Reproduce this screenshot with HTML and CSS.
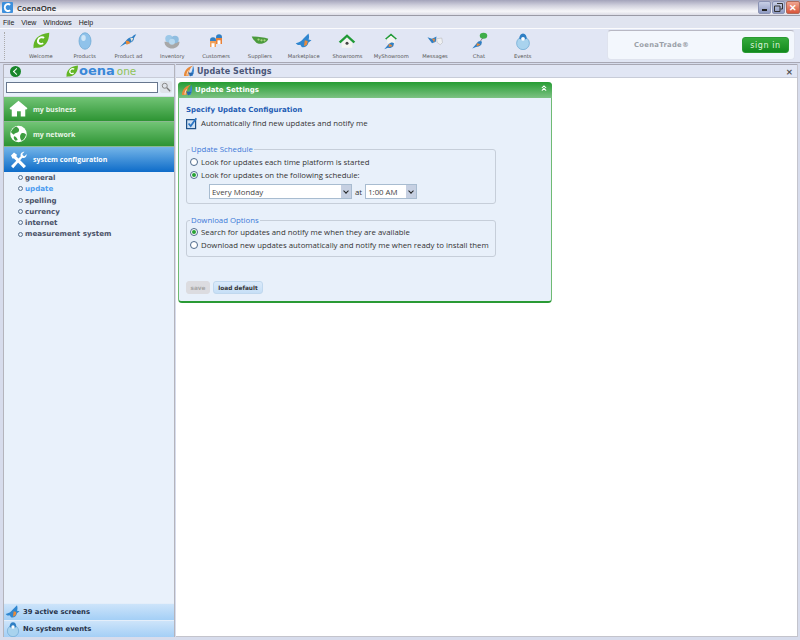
FILE: index.html
```html
<!DOCTYPE html>
<html lang="en">
<head>
  <meta charset="UTF-8" />
  <title>CoenaOne</title>
  <link rel="stylesheet" href="styles.css">
</head>
<body>
  <svg class="defs" width="0" height="0">
    <defs>
      <symbol id="bird" viewBox="0 0 24 24">
        <path d="M1 20 9 12c2-3 5-5 8-5l3-3 3-1-3 5c0 4-3 6-7 7l-5 1z" fill="#2f7fc4"/>
        <path d="M9 12c3-1 5 0 6 3l-5 2z" fill="#e88a3a"/>
        <path d="M15 8l2 5 2-5z" fill="#e8e4d8"/>
      </symbol>
      <symbol id="bird-fly" viewBox="0 0 24 24">
        <path d="M1 15c5-1 8-3 10-6l7-7c1 3 1 6 0 8l4 1-4 3c-1 5-5 7-9 6l-2-3c-3 1-4 0-6-2z" fill="#2f86cf"/>
        <path d="M13 11l4 1-1 5-4 2z" fill="#e88a3a"/>
      </symbol>
      <symbol id="house" viewBox="0 0 24 24">
        <path d="M1 13 12 3l11 10-2.500 2L12 7l-8.500 8z" fill="#1f9a35"/>
        <path d="M5 14 12 8l7 6v7H5z" fill="#f4f4f0"/>
        <circle cx="12" cy="15" r="2" fill="#444"/>
      </symbol>
      <symbol id="leaf" viewBox="0 0 24 24">
        <path d="M2 22C1 10 8 3 23 1c0 12-6 20-16 20-2 0-4 0-5 1z" fill="#63b626"/>
        <path d="M16 8c-2-2-7-1-8 3s3 6 7 4" fill="none" stroke="#fff" stroke-width="2.500"/>
      </symbol>
      <symbol id="ball" viewBox="0 0 24 24">
        <circle cx="12" cy="15" r="8.500" fill="#a9d3ee" stroke="#6fa9d3"/>
        <path d="M7 9c0-4 2-7 5-7s5 3 5 7c-3 2-7 2-10 0z" fill="#2f7fc4"/>
        <circle cx="12" cy="9" r="2.500" fill="#fff"/>
      </symbol>
      <symbol id="refresh" viewBox="0 0 24 24">
        <path d="M2 22C2 11 9 4 20 1c-6 5-9 11-9 21z" fill="#e88a3a"/>
        <path d="M20 1c3 6 3 14-1 21h-7c5-5 7-12 8-21z" fill="#3b86cf"/>
        <path d="M10 15l11 1-6 7z" fill="#2a68ad"/>
        <path d="M8 21c0-4 1-7 3-10" stroke="#fff" fill="none" stroke-width="1.500"/>
      </symbol>
    </defs>
  </svg>

  <header class="titlebar">
    <svg class="app-icon" viewBox="0 0 12 12"><rect width="12" height="12" rx="1" fill="#3d8fdc"/><path d="M9 3C6 1 3 3 3 6s3 5 6 3" fill="none" stroke="#fff" stroke-width="2"/></svg>
    <span class="app-name">CoenaOne</span>
    <div class="win-btns">
      <span class="win-btn"><i class="min-glyph"></i></span>
      <span class="win-btn">
        <svg viewBox="0 0 9 9" width="9" height="9"><path d="M3 .5h5.500V6H6.500M.5 3H6v5.500H.5z" fill="none" stroke="#333"/></svg>
      </span>
      <span class="win-btn win-close">✕</span>
    </div>
  </header>

  <nav class="menubar">
    <span>File</span><span>View</span><span>Windows</span><span>Help</span>
  </nav>

  <div class="toolbar">
    <div class="tools">
      <div class="tool"><svg class="tool-icon"><use href="#leaf"/></svg><span>Welcome</span></div>
      <div class="tool">
        <svg class="tool-icon" viewBox="0 0 24 24"><ellipse cx="12" cy="12" rx="8" ry="11" fill="#8fc2ea" stroke="#6fa9d3"/><ellipse cx="10" cy="8" rx="3" ry="4" fill="#cfe6f7"/></svg>
        <span>Products</span>
      </div>
      <div class="tool"><svg class="tool-icon"><use href="#bird"/></svg><span>Product ad</span></div>
      <div class="tool">
        <svg class="tool-icon" viewBox="0 0 24 24"><path d="M2 13c0 6 5 9 10 9s10-3 10-9z" fill="#a8a8a8"/><circle cx="8" cy="9" r="5" fill="#9cc8e8"/><circle cx="16" cy="10" r="5" fill="#8fbde0"/><circle cx="12" cy="13" r="4" fill="#b8d9f0"/></svg>
        <span>Inventory</span>
      </div>
      <div class="tool">
        <svg class="tool-icon" viewBox="0 0 24 24"><circle cx="8" cy="11" r="4" fill="#2f7fc4"/><path d="M4 12h8v8H4z" fill="#f0a05a"/><path d="M6 15h4v5H6z" fill="#fff"/><circle cx="16" cy="7" r="4" fill="#2f7fc4"/><path d="M12 8h8v8h-8z" fill="#e8823a"/><path d="M14 11h4v5h-4z" fill="#fff"/></svg>
        <span>Customers</span>
      </div>
      <div class="tool">
        <svg class="tool-icon" viewBox="0 0 24 24"><path d="M1 6c6 0 16 1 22 3-2 7-14 9-17 4C4 11 2 9 1 6z" fill="#4b9a3c"/><circle cx="10" cy="10" r="1.500" fill="#a6d67e"/><circle cx="14" cy="11" r="1.500" fill="#a6d67e"/><circle cx="18" cy="11" r="1.500" fill="#a6d67e"/></svg>
        <span>Suppliers</span>
      </div>
      <div class="tool"><svg class="tool-icon"><use href="#bird-fly"/></svg><span>Marketplace</span></div>
      <div class="tool"><svg class="tool-icon"><use href="#house"/></svg><span>Showrooms</span></div>
      <div class="tool">
        <svg class="tool-icon" viewBox="0 0 24 24"><path d="M4 9 12 2l8 7-2 1-6-5-6 5z" fill="#1f9a35"/><path d="M7 9l5-4 5 4v6H7z" fill="#f4f4f0"/><path d="M3 23l6-7c2-2 5-3 7-1l-1 4c-2 2-5 3-7 2z" fill="#2f7fc4"/><path d="M9 16c2 0 4 1 5 3l-5 1z" fill="#e88a3a"/></svg>
        <span>MyShowroom</span>
      </div>
      <div class="tool">
        <svg class="tool-icon" viewBox="0 0 24 24"><path d="M2 7l6 2 6-3-1 7-5 2z" fill="#2f7fc4"/><path d="M8 9l4 0-1 5z" fill="#e88a3a"/><path d="M14 9l7-1 1 6-3 3-4-3z" fill="#eef0f2" stroke="#aaa" stroke-width=".6"/></svg>
        <span>Messages</span>
      </div>
      <div class="tool">
        <svg class="tool-icon" viewBox="0 0 24 24"><ellipse cx="18" cy="5" rx="5" ry="4" fill="#3fae49"/><path d="M3 22l6-7c2-3 5-4 7-2l-1 4c-2 2-5 3-7 3z" fill="#2f7fc4"/><path d="M9 15c2 0 4 1 5 2l-5 2z" fill="#e88a3a"/><path d="M14 12l3-4" stroke="#666"/></svg>
        <span>Chat</span>
      </div>
      <div class="tool"><svg class="tool-icon"><use href="#ball"/></svg><span>Events</span></div>
    </div>
    <div class="signin-box">
      <span class="trade">CoenaTrade®</span>
      <button class="signin-btn">sign in</button>
    </div>
  </div>

  <div class="workspace">
    <aside class="sidebar">
      <div class="side-head">
        <span class="back-btn"></span>
        <div class="logo">
          <svg class="logo-leaf"><use href="#leaf"/></svg><span class="logo-a">oena</span><span class="logo-b">one</span>
        </div>
      </div>
      <div class="search-row">
        <input class="search-input" type="text">
        <span class="search-btn">
          <svg viewBox="0 0 12 12" width="10" height="10"><circle cx="4.500" cy="4.500" r="3" fill="none" stroke="#888" stroke-width="1.200"/><path d="M7 7l4 4" stroke="#777" stroke-width="1.600"/></svg>
        </span>
      </div>

      <div class="acc acc-green">
        <svg class="acc-icon" viewBox="0 0 24 24"><path d="M0 11 12 1l12 10-1.500 1.500H21V22h-6v-7H10v7H3V12.500H1.500z" fill="#fff"/></svg>
        <span>my business</span>
      </div>
      <div class="acc acc-green">
        <svg class="acc-icon" viewBox="0 0 24 24"><circle cx="12" cy="12" r="11" fill="#fff"/><path d="M9 2c3 2 5 4 3 7-2 2-5 1-6 4-2-1-4-3-4-4 2-3 4-6 7-7zM16 11c3-1 5 0 6 2-1 4-3 7-6 8-2-3-3-7 0-10zM6 15c2 0 4 2 5 5l-3 1c-2-2-3-4-2-6z" fill="#3d9d3f"/></svg>
        <span>my network</span>
      </div>
      <div class="acc acc-blue">
        <svg class="acc-icon" viewBox="0 0 24 24"><path d="M2 20 15 7c-1-3 1-6 5-6l-3 3 1 2 2 1 3-3c0 4-3 6-6 5L5 23z" fill="#fff"/><path d="M2 6l4-4 4 3-1 2 13 13-3 3L6 10 4 10z" fill="#fff"/></svg>
        <span>system configuration</span>
      </div>
      <ul class="sub-list">
        <li>general</li>
        <li class="sub-active">update</li>
        <li>spelling</li>
        <li>currency</li>
        <li>internet</li>
        <li>measurement system</li>
      </ul>

      <div class="side-foot">
        <div class="foot-row"><svg class="foot-icon"><use href="#bird-fly"/></svg><span>39 active screens</span></div>
        <div class="foot-row"><svg class="foot-icon"><use href="#ball"/></svg><span>No system events</span></div>
      </div>
    </aside>

    <main class="content">
      <div class="content-head">
        <svg class="head-icon"><use href="#refresh"/></svg>
        <span class="content-title">Update Settings</span>
        <span class="content-x">✕</span>
      </div>
      <div class="content-body">
        <section class="panel">
          <div class="panel-head">
            <svg class="head-icon"><use href="#refresh"/></svg>
            <span class="panel-title">Update Settings</span>
            <svg class="chevrons" viewBox="0 0 7 7"><path d="M1 3.500 3.500 1 6 3.500M1 6.500 3.500 4 6 6.500" fill="none" stroke="#fff" stroke-width="1.200"/></svg>
          </div>
          <div class="panel-body">
            <h2 class="spec-title">Specify Update Configuration</h2>
            <div class="auto-row">
              <svg class="big-check" viewBox="0 0 14 14"><rect x=".7" y="2.500" width="10.500" height="10.500" fill="#cfe0f2" stroke="#1d4f86" stroke-width="1.400"/><path d="M3 7l2.500 3L12 1" fill="none" stroke="#2a76c6" stroke-width="2"/></svg>
              <span>Automatically find new updates and notify me</span>
            </div>

            <fieldset class="group group-schedule">
              <legend>Update Schedule</legend>
              <div class="radio-row"><i class="radio"></i>Look for updates each time platform is started</div>
              <div class="radio-row"><i class="radio radio-on"></i>Look for updates on the following schedule:</div>
              <div class="select-row">
                <span class="select select-day"><span class="select-text">Every Monday</span><i class="select-arrow"></i></span>
                <span>at</span>
                <span class="select select-time"><span class="select-text">1:00 AM</span><i class="select-arrow"></i></span>
              </div>
            </fieldset>

            <fieldset class="group group-download">
              <legend>Download Options</legend>
              <div class="radio-row"><i class="radio radio-on"></i>Search for updates and notify me when they are available</div>
              <div class="radio-row"><i class="radio"></i>Download new updates automatically and notify me when ready to install them</div>
            </fieldset>

            <div class="actions">
              <button class="btn btn-off">save</button>
              <button class="btn btn-on">load default</button>
            </div>
          </div>
        </section>
      </div>
    </main>
  </div>
</body>
</html>
```

FILE: styles.css
```css
* {
  box-sizing: border-box;
}

html, body {
  margin: 0;
  height: 640px;
  overflow: hidden;
}

body {
  display: flex;
  flex-direction: column;
  background: #e0e4f0;
  font-family: "Open Sans", "Noto Sans", sans-serif;
  font-size: 7.800px;
  color: #333;
}

.defs {
  position: absolute;
}

/* window chrome */
.titlebar {
  height: 16px;
  display: flex;
  align-items: center;
  padding-left: 2px;
  background: linear-gradient(#a3a3ba, #cfcfdc 35%, #f6f6f9 75%, #dcdce6);
  border-bottom: 1px solid #9a9aa6;
}

.app-icon {
  width: 11px;
  height: 11px;
}

.app-name {
  margin-left: 4px;
  font-size: 7.800px;
  font-weight: 600;
  color: #222;
}

.win-btns {
  margin-left: auto;
  display: flex;
  gap: 1px;
}

.win-btn {
  width: 13px;
  height: 13px;
  display: flex;
  align-items: center;
  justify-content: center;
  border: 1px solid #8b93b4;
  border-radius: 2px;
  background: linear-gradient(#c8cfe6, #8e9ac2);
}

.win-close {
  width: 14px;
  border-color: #b06a5a;
  background: linear-gradient(#f0a590, #d9553a);
  color: #fff;
  font-size: 9px;
  font-weight: 700;
}

.min-glyph {
  width: 5px;
  height: 2px;
  margin-top: 5px;
  background: #222;
}

.menubar {
  height: 12px;
  display: flex;
  align-items: center;
  gap: 7px;
  padding-left: 3px;
  color: #222;
  font-family: "Liberation Sans", sans-serif;
  font-size: 7px;
}

.toolbar {
  height: 35px;
  display: flex;
  background: #e1e6f4;
  border-top: 1px solid #fbfbfd;
  border-bottom: 1px solid #a8a8b4;
}

.tools {
  display: flex;
  height: 28px;
  margin: 3px 0 0 4px;
  padding-left: 14px;
  border-left: 1px dotted #aaa;
}

.tool {
  width: 43.800px;
  height: 28px;
  display: flex;
  flex-direction: column;
  align-items: center;
  justify-content: space-between;
  font-family: "DejaVu Sans", sans-serif;
  font-size: 5.200px;
  line-height: 7px;
  color: #555;
  white-space: nowrap;
}

.tool-icon {
  width: 18px;
  height: 18px;
  flex: none;
}

.signin-box {
  width: 188px;
  height: 30px;
  margin: 1px 5px 0 auto;
  display: flex;
  align-items: center;
  padding: 0 5px 0 26px;
  background: #f3f7fd;
  border: 1px solid #dfe3ee;
  border-top-color: #b8b8c4;
  border-radius: 4px;
}

.trade {
  font-family: "DejaVu Sans", sans-serif;
  font-size: 6.800px;
  font-weight: 700;
  color: #9aa0a8;
  letter-spacing: .3px;
}

.signin-btn {
  margin-left: auto;
  width: 47px;
  height: 16px;
  padding: 0;
  border: 1px solid #2a9a32;
  border-radius: 3px;
  background: linear-gradient(#35ab3c, #138a1d);
  color: #dff3de;
  font-family: "DejaVu Sans", sans-serif;
  font-size: 8px;
  letter-spacing: .6px;
}

/* main area */
.workspace {
  flex: 1;
  display: flex;
  min-height: 0;
  padding: 1px 2px 3px 3px;
  gap: 1px;
  background: #d7dcec;
}

.sidebar {
  width: 172px;
  display: flex;
  flex-direction: column;
  background: #e9f1fb;
  border-left: 1px solid #b4b4bc;
  border-right: 1px solid #b4b4bc;
}

.side-head {
  height: 14px;
  display: flex;
  align-items: center;
  padding-left: 6px;
  background: #e1e6f4;
  border-top: 1px solid #a8a8b4;
  border-bottom: 1px solid #c8ccd8;
}

.back-btn {
  width: 11px;
  height: 11px;
  border-radius: 50%;
  background: #19862a;
  position: relative;
}

.back-btn::after {
  content: "";
  position: absolute;
  left: 4px;
  top: 3.500px;
  width: 4px;
  height: 4px;
  border-left: 1.500px solid #fff;
  border-bottom: 1.500px solid #fff;
  transform: rotate(45deg);
}

.logo {
  display: flex;
  align-items: center;
  margin-left: 44px;
  font-family: "DejaVu Sans", sans-serif;
  line-height: 12px;
}

.logo-leaf {
  width: 14px;
  height: 13px;
}

.logo-a {
  font-size: 13px;
  font-weight: 700;
  color: #3a88d8;
}

.logo-b {
  margin-left: 2px;
  font-size: 10.500px;
  color: #8fc35a;
}

.search-row {
  height: 19px;
  display: flex;
  align-items: center;
  gap: 2px;
  padding-left: 2px;
  border-bottom: 1px solid #d8dce6;
}

.search-input {
  width: 152px;
  height: 11px;
  padding: 0;
  border: 1px solid #66768e;
  background: #fff;
}

.search-btn {
  width: 12px;
  height: 12px;
  display: flex;
  align-items: center;
  justify-content: center;
  background: #dfe3ea;
  border-radius: 2px;
}

.acc {
  height: 25px;
  flex: none;
  display: flex;
  align-items: center;
  padding-left: 5px;
  font-size: 7px;
  font-weight: 700;
  color: #e8f5e6;
}

.acc-green {
  background: linear-gradient(#72c476, #2d9433);
  border-bottom: 1px solid #8bb890;
}

.acc-blue {
  background: linear-gradient(#74b5e8, #0e6cc9);
  color: #fff;
}

.acc-icon {
  width: 19px;
  height: 18px;
  margin-right: 5px;
}

.sub-list {
  margin: 0;
  padding: 0 0 0 14px;
  list-style: none;
  font-family: "DejaVu Sans", sans-serif;
  font-size: 7.100px;
  font-weight: 700;
  line-height: 11.300px;
  color: #4a5268;
}

.sub-list li {
  display: flex;
  align-items: center;
}

.sub-list li::before {
  content: "";
  width: 3px;
  height: 3px;
  flex: none;
  margin-right: 2px;
  border: 1px solid #58708c;
  border-radius: 50%;
}

.sub-list .sub-active {
  color: #4b9cf0;
}

.side-foot {
  margin-top: auto;
}

.foot-row {
  height: 17px;
  display: flex;
  align-items: center;
  padding-left: 1px;
  gap: 2px;
  background: linear-gradient(#cde4fa, #a4cff6);
  border-top: 1px solid #e4eefa;
  font-family: "DejaVu Sans", sans-serif;
  font-size: 6.800px;
  font-weight: 700;
  color: #26324a;
}

.foot-icon {
  width: 16px;
  height: 16px;
}

.content {
  flex: 1;
  display: flex;
  flex-direction: column;
  background: #fff;
  border-bottom: 1px solid #c4c4cc;
  border-right: 1px solid #c4c4cc;
}

.content-head {
  height: 14px;
  display: flex;
  align-items: center;
  padding: 0 4px 0 7px;
  background: #e1e6f4;
  border-top: 1px solid #a8a8b4;
  border-bottom: 1px solid #c8ccd8;
}

.head-icon {
  width: 12px;
  height: 12px;
}

.content-title {
  margin-left: 2px;
  font-family: "DejaVu Sans", sans-serif;
  font-size: 8px;
  font-weight: 700;
  letter-spacing: .1px;
  color: #4a5678;
}

.content-x {
  margin-left: auto;
  font-size: 8px;
  font-weight: 700;
  color: #555;
}

.content-body {
  flex: 1;
  padding: 4px 0 0 2px;
}

.panel {
  width: 374px;
  height: 221px;
  display: flex;
  flex-direction: column;
  background: #e8f0fa;
  border-left: 1px solid #6fba74;
  border-right: 1px solid #6fba74;
  border-bottom: 2px solid #2a9a35;
  border-radius: 4px;
}

.panel-head {
  height: 16px;
  flex: none;
  display: flex;
  align-items: center;
  margin: 0 -1px;
  padding: 0 5px 0 3px;
  background: linear-gradient(#269c33, #7cc283);
  border-radius: 4px 4px 0 0;
}

.panel-title {
  margin-left: 2px;
  font-family: "DejaVu Sans", sans-serif;
  font-size: 7px;
  font-weight: 700;
  color: #fff;
}

.chevrons {
  margin-left: auto;
  width: 6px;
  height: 6px;
  margin-top: -4px;
}

.panel-body {
  flex: 1;
  display: flex;
  flex-direction: column;
  padding: 7px 6px 7px 7px;
}

.spec-title {
  margin: 0;
  font-family: "DejaVu Sans", sans-serif;
  font-size: 7px;
  font-weight: 700;
  line-height: 10px;
  color: #1e5cb4;
}

.auto-row {
  display: flex;
  align-items: center;
  gap: 3px;
  height: 14px;
  margin-top: 1px;
}

.big-check {
  width: 12px;
  height: 13px;
}

.group {
  width: 310px;
  min-width: 0;
  margin: 14px 0 0;
  padding: 1px 0 0 3px;
  border: 1px solid #c6ced9;
  border-radius: 3px;
}

.group-schedule {
  height: 60px;
}

.group-download {
  height: 42px;
  margin-top: 11px;
  padding-top: 0;
}

.group legend {
  margin-left: 0;
  padding: 0 1px;
  font-size: 7.800px;
  line-height: 10px;
  color: #3c78d8;
}

.radio-row {
  height: 13px;
  display: flex;
  align-items: center;
  gap: 3px;
  white-space: nowrap;
}

.group-download .radio-row {
  height: 13.500px;
}

.radio {
  width: 8px;
  height: 8px;
  flex: none;
  display: flex;
  align-items: center;
  justify-content: center;
  border: 1px solid #4d6a8c;
  border-radius: 50%;
  background: #fff;
}

.radio-on::after {
  content: "";
  width: 4px;
  height: 4px;
  border-radius: 50%;
  background: #26a234;
}

.select-row {
  display: flex;
  align-items: center;
  gap: 3px;
  margin: 3px 0 0 19px;
  height: 15px;
}

.select {
  height: 15px;
  display: flex;
  align-items: center;
  justify-content: space-between;
  background: #fff;
  border: 1px solid #a8bcd0;
}

.select-day {
  width: 143px;
}

.select-time {
  width: 52px;
}

.select-text {
  padding-left: 2px;
  color: #444;
}

.select-arrow {
  width: 10px;
  height: 13px;
  display: flex;
  align-items: center;
  justify-content: center;
  background: #c6d0e2;
}

.select-arrow::after {
  content: "";
  width: 3px;
  height: 3px;
  margin-top: -2px;
  border-right: 1.500px solid #222;
  border-bottom: 1.500px solid #222;
  transform: rotate(45deg);
}

.actions {
  display: flex;
  gap: 3px;
  margin-top: auto;
}

.btn {
  height: 13px;
  padding: 0;
  border-radius: 3px;
  font-family: "DejaVu Sans", sans-serif;
  font-size: 5.800px;
  font-weight: 700;
}

.btn-off {
  width: 24px;
  border: 1px solid #dcdce0;
  background: #dcdce0;
  color: #a6a6a6;
}

.btn-on {
  width: 50px;
  border: 1px solid #c0d8ee;
  background: linear-gradient(#dbeafa, #c6dff6);
  color: #333;
}
```
